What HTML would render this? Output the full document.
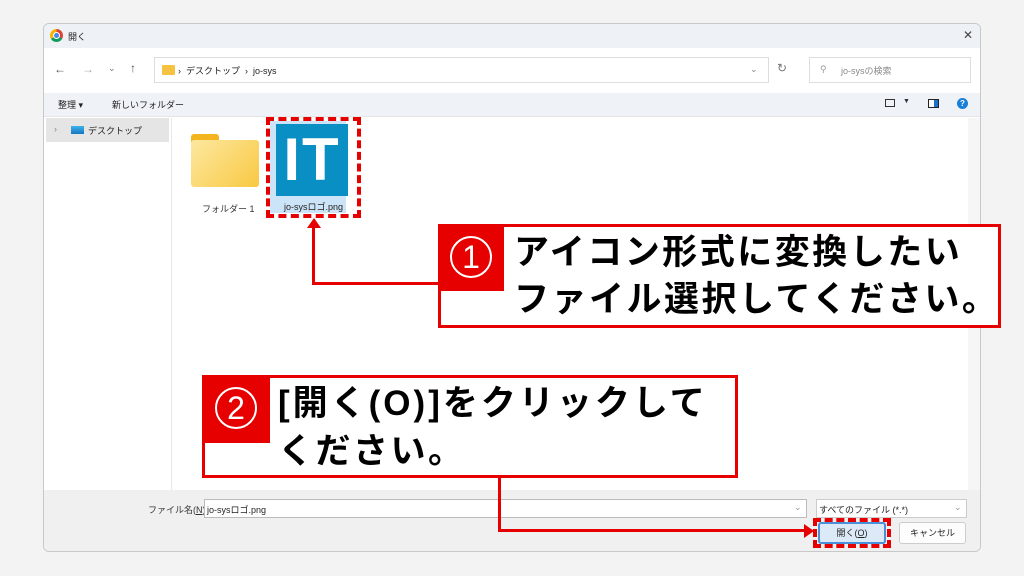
<!DOCTYPE html>
<html><head><meta charset="utf-8"><style>
*{margin:0;padding:0;box-sizing:border-box}
body{width:1024px;height:576px;background:#f3f3f3;position:relative;overflow:hidden;font-family:"Liberation Sans","Noto Sans CJK JP",sans-serif;font-size:9px;color:#222}
.a{position:absolute}
.dlg{left:43px;top:23px;width:938px;height:529px;background:#fff;border:1px solid #c8c8c8;border-radius:6px;overflow:hidden}
.box{position:absolute;border:3px solid #e60000;background:#fff}
.badge{position:absolute;background:#e60000;left:-3px;top:-3px}
.circ{position:absolute;border:2px solid #fff;border-radius:50%;color:#fff;font-weight:normal;text-align:center}
.big{position:absolute;font-weight:bold;font-size:35px;line-height:48px;color:#000;white-space:nowrap;letter-spacing:2.5px}
</style></head><body>
<div class="a dlg">
 <div class="a" style="left:0;top:0;width:938px;height:24px;background:#eef1f6"></div>
 <div class="a" style="left:6px;top:5px;width:13px;height:13px;border-radius:50%;background:conic-gradient(#db4437 0 33%,#0f9d58 0 66%,#f4b400 0);"></div>
 <div class="a" style="left:10px;top:9px;width:5px;height:5px;border-radius:50%;background:#4285f4;outline:1px solid #fff"></div>
 <div class="a" style="left:24px;top:6px">開く</div>
 <div class="a" style="left:919px;top:4px;font-size:12px;color:#444">✕</div>
 <div class="a" style="left:10px;top:38px;font-size:12px;color:#555">←</div>
 <div class="a" style="left:38px;top:38px;font-size:12px;color:#aaa">→</div>
 <div class="a" style="left:64px;top:39px;font-size:9px;color:#777">⌄</div>
 <div class="a" style="left:86px;top:37px;font-size:12px;color:#555">↑</div>
 <div class="a" style="left:110px;top:33px;width:615px;height:26px;border:1px solid #ddd"></div>
 <div class="a" style="left:118px;top:41px;width:13px;height:10px;background:#f5c242;border-radius:1px"></div>
 <div class="a" style="left:134px;top:40px">›&nbsp; デスクトップ&nbsp; ›&nbsp; jo-sys</div>
 <div class="a" style="left:706px;top:40px;color:#888">⌄</div>
 <div class="a" style="left:733px;top:37px;font-size:12px;color:#777">↻</div>
 <div class="a" style="left:765px;top:33px;width:162px;height:26px;border:1px solid #ddd"></div>
 <div class="a" style="left:776px;top:40px;color:#999">⚲</div>
 <div class="a" style="left:797px;top:40px;color:#888">jo-sysの検索</div>
 <div class="a" style="left:0;top:69px;width:938px;height:24px;background:#eff2f7;border-bottom:1px solid #e5e5e5"></div>
 <div class="a" style="left:14px;top:74px">整理 ▾</div>
 <div class="a" style="left:68px;top:74px">新しいフォルダー</div>
 <div class="a" style="left:841px;top:75px;width:10px;height:8px;border:1px solid #333"></div>
 <div class="a" style="left:859px;top:74px;font-size:7px;color:#234">▼</div>
 <div class="a" style="left:884px;top:75px;width:11px;height:9px;border:1px solid #222;background:linear-gradient(90deg,#fff 55%,#1a73c8 0)"></div>
 <div class="a" style="left:913px;top:74px;width:11px;height:11px;border-radius:50%;background:#1a7fd8;color:#fff;font-size:8px;text-align:center;line-height:11px;font-weight:bold">?</div>
 <div class="a" style="left:2px;top:94px;width:123px;height:24px;background:#e5e5e5"></div>
 <div class="a" style="left:10px;top:100px;color:#888">›</div>
 <div class="a" style="left:27px;top:102px;width:13px;height:8px;background:linear-gradient(#3fb1e8,#1677c4)"></div>
 <div class="a" style="left:44px;top:100px">デスクトップ</div>
 <div class="a" style="left:127px;top:94px;width:1px;height:372px;background:#e8e8e8"></div>
 <div class="a" style="left:924px;top:94px;width:14px;height:372px;background:#f6f6f6"></div>
 <div class="a" style="left:147px;top:110px;width:28px;height:12px;background:#f2b51f;border-radius:3px"></div>
 <div class="a" style="left:147px;top:116px;width:68px;height:47px;background:linear-gradient(135deg,#fde8a0,#f8c842);border-radius:3px"></div>
 <div class="a" style="left:158px;top:178px;color:#333">フォルダー 1</div>
 <div class="a" style="left:226px;top:97px;width:76px;height:92px;background:#cce4f7"></div>
 <div class="a" style="left:232px;top:100px;width:72px;height:72px;background:#0a8fc4;color:#fff;font-weight:bold;font-size:60px;line-height:72px;text-align:center;letter-spacing:2px">IT</div>
 <div class="a" style="left:240px;top:176px;color:#222">jo-sysロゴ.png</div>
 <div class="a" style="left:222px;top:93px;width:95px;height:101px;border:4px dashed #e60000"></div>
 <div class="a" style="left:0;top:466px;width:938px;height:63px;background:#f0f0f0"></div>
 <div class="a" style="left:104px;top:479px;color:#333">ファイル名(<u>N</u>):</div>
 <div class="a" style="left:160px;top:475px;width:603px;height:19px;background:#fff;border:1px solid #bbb;padding:3px 2px">jo-sysロゴ.png</div>
 <div class="a" style="left:750px;top:478px;color:#999">⌄</div>
 <div class="a" style="left:772px;top:475px;width:151px;height:19px;background:#fff;border:1px solid #ccc;padding:3px 2px">すべてのファイル (*.*)</div>
 <div class="a" style="left:910px;top:478px;color:#999">⌄</div>
 <div class="a" style="left:774px;top:498px;width:68px;height:22px;background:#dceaf7;border:2px solid #4a90d9;border-radius:3px;text-align:center;line-height:18px">開く(<u>O</u>)</div>
 <div class="a" style="left:855px;top:498px;width:67px;height:22px;background:#fdfdfd;border:1px solid #ccc;border-radius:3px;text-align:center;line-height:20px">キャンセル</div>
 <div class="a" style="left:769px;top:494px;width:78px;height:30px;border:4px dashed #e60000"></div>
</div>
<div class="a" style="left:312px;top:224px;width:3px;height:61px;background:#e60000"></div>
<div class="a" style="left:312px;top:282px;width:128px;height:3px;background:#e60000"></div>
<div class="a" style="left:307px;top:218px;width:0;height:0;border-left:7px solid transparent;border-right:7px solid transparent;border-bottom:10px solid #e60000"></div>
<div class="a" style="left:498px;top:477px;width:3px;height:55px;background:#e60000"></div>
<div class="a" style="left:498px;top:529px;width:308px;height:3px;background:#e60000"></div>
<div class="a" style="left:804px;top:524px;width:0;height:0;border-top:7px solid transparent;border-bottom:7px solid transparent;border-left:10px solid #e60000"></div>
<div class="box" style="left:438px;top:224px;width:563px;height:104px">
 <div class="badge" style="width:66px;height:67px"><div class="circ" style="left:12px;top:12px;width:42px;height:42px;font-size:32px;line-height:38px">1</div></div>
 <div class="big" style="left:73px;top:2px">アイコン形式に変換したい</div>
 <div class="big" style="left:73px;top:49px">ファイル選択してください。</div>
</div>
<div class="box" style="left:202px;top:375px;width:536px;height:103px">
 <div class="badge" style="width:68px;height:68px"><div class="circ" style="left:13px;top:12px;width:42px;height:42px;font-size:32px;line-height:38px">2</div></div>
 <div class="big" style="left:73px;top:2px;letter-spacing:3px">[開く(O)]をクリックして</div>
 <div class="big" style="left:73px;top:50px">ください。</div>
</div>
</body></html>
